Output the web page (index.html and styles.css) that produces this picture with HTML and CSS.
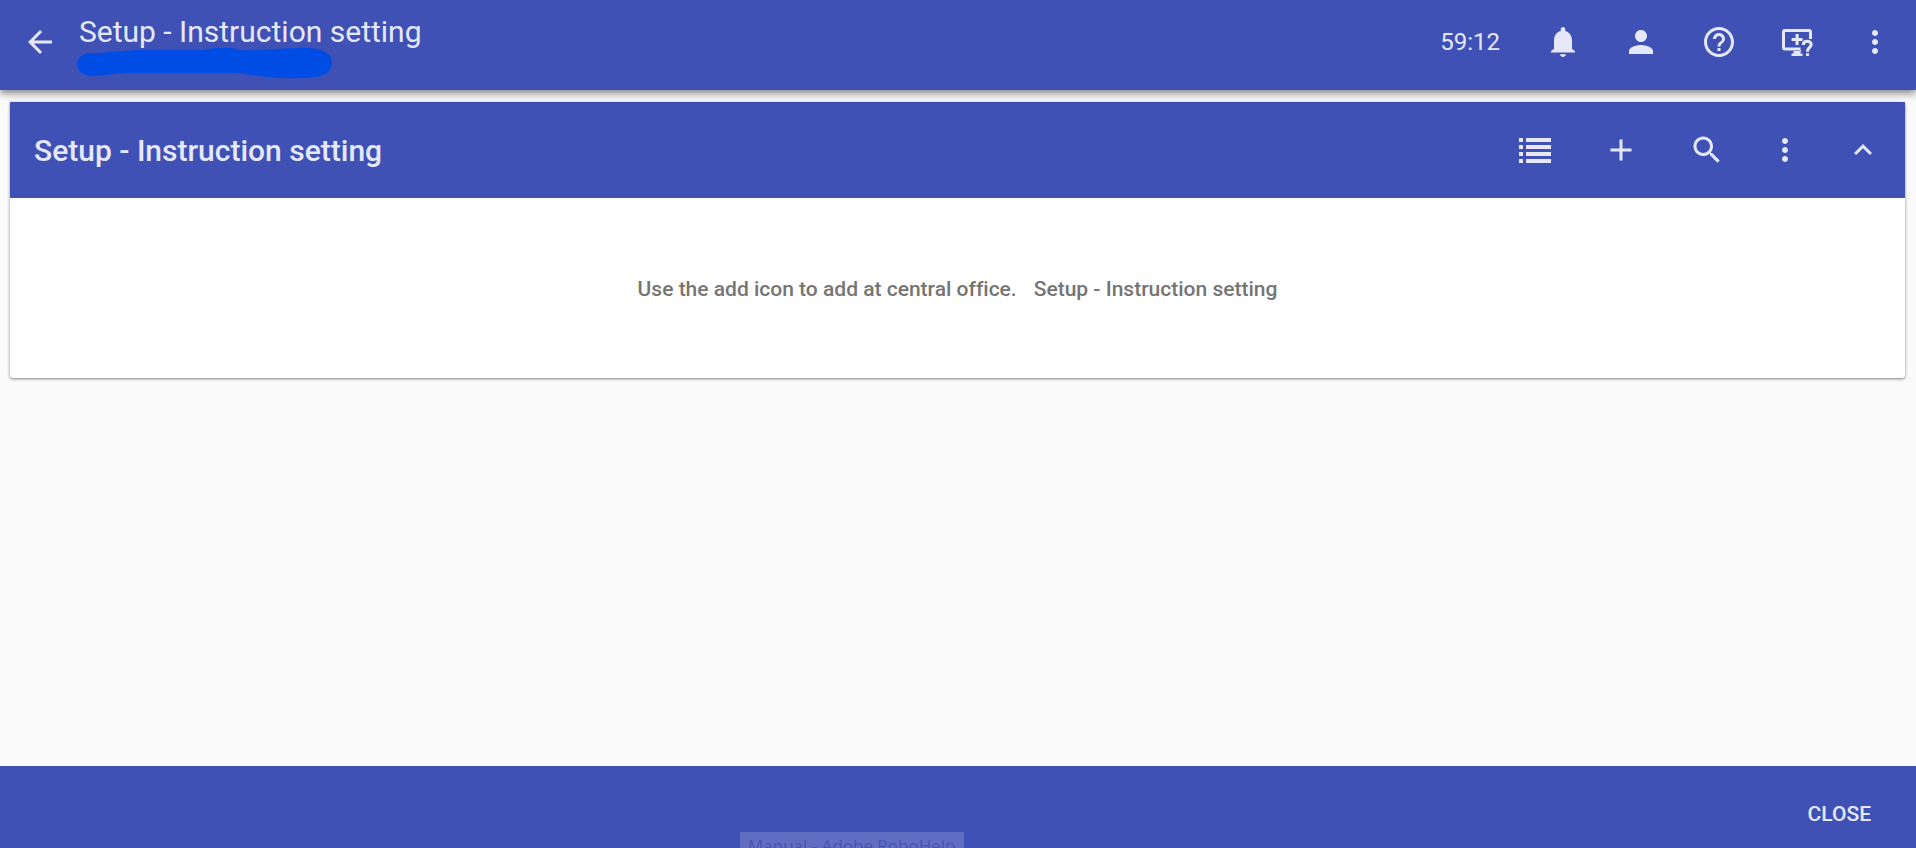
FILE: index.html
```html
<!DOCTYPE html>
<html lang="en">
<head>
<meta charset="utf-8">
<title>Setup - Instruction setting</title>
<link rel="stylesheet" href="styles.css">
</head>
<body>
<header class="topbar">
  <button class="icon-btn" aria-label="Back"><svg class="icon" viewBox="0 0 24 24"><path d="M20 11H7.83l5.59-5.59L12 4l-8 8 8 8 1.41-1.41L7.83 13H20v-2z"/></svg></button>
  <div class="heading">
    <h1 class="page-title">Setup - Instruction setting</h1>
    <svg class="scribble" viewBox="0 0 256 32" aria-hidden="true"><path d="M14 5C30 5 40 3 60 2H128C138-1 154-1 164 2C188 3 200 0 228 0C242 0 254 3 255 14C255 23 248 28 238 29C210 32 185 29 162 25H50C38 25 28 28 16 28C6 28 0 23 0 16C0 10 6 5 14 5Z"/></svg>
  </div>
  <span class="timer">59:12</span>
  <nav class="actions">
    <button class="icon-btn" aria-label="Notifications"><svg class="icon" viewBox="0 0 24 24"><path d="M12 22c1.1 0 2-.9 2-1.8h-4c0 .9.9 1.8 2 1.800zm6-5.500v-5.500c0-3.070-1.640-5.640-4.500-6.320V3.500C13.500 2.670 12.830 2 12 2s-1.500.67-1.500 1.500v1.180C7.630 5.360 6 7.920 6 11v5.500l-2 1.500v1h16v-1z"/></svg></button>
    <button class="icon-btn" aria-label="Account"><svg class="icon" viewBox="0 0 24 24"><path d="M12 12c2.210 0 4-1.790 4-4s-1.790-4-4-4-4 1.790-4 4 1.790 4 4 4zm0 2c-2.670 0-8 1.340-8 4v2h16v-2c0-2.660-5.330-4-8-4z"/></svg></button>
    <button class="icon-btn" aria-label="Help"><svg class="icon" viewBox="0 0 24 24"><path d="M11 18h2v-2h-2v2zm1-16C6.480 2 2 6.480 2 12s4.480 10 10 10 10-4.480 10-10S17.520 2 12 2zm0 18c-4.410 0-8-3.590-8-8s3.590-8 8-8 8 3.590 8 8-3.590 8-8 8zm0-14c-2.210 0-4 1.790-4 4h2c0-1.100.9-2 2-2s2 .9 2 2c0 2-3 1.750-3 5h2c0-2.250 3-2.500 3-5 0-2.210-1.790-4-4-4z"/></svg></button>
    <button class="icon-btn" aria-label="Remote support"><svg class="icon" viewBox="0 0 36 36"><path d="M33 15V8Q33 5 30 5H6Q3 5 3 8V23.500Q3 26.500 6 26.500H21.500V23.500H6V8H30V15ZM16.600 10h3v4h4v3h-4v4h-3v-4h-4v-3h4ZM14.500 26h7.500v2.500h-1v1h2.500v2.500H12.500v-2.500h2Z"/><path class="stroke" d="M24.300 21C24.300 18.200 26 17.200 28.200 17.200S32.200 18.500 32.200 20.600C32.200 23.500 28.400 23.600 28.400 27.800"/><path d="M27 29.200h3v2.800h-3z"/></svg></button>
    <button class="icon-btn" aria-label="More"><svg class="icon" viewBox="0 0 24 24"><path d="M12 8c1.100 0 2-.9 2-2s-.9-2-2-2-2 .9-2 2 .9 2 2 2zm0 2c-1.100 0-2 .9-2 2s.9 2 2 2 2-.9 2-2-.9-2-2-2zm0 6c-1.100 0-2 .9-2 2s.9 2 2 2 2-.9 2-2-.9-2-2-2z"/></svg></button>
  </nav>
</header>
<main class="content">
  <section class="card">
    <div class="card-head">
      <h2 class="card-title">Setup - Instruction setting</h2>
      <div class="card-tools">
        <div class="main-tools">
          <button class="icon-btn" aria-label="List view"><svg class="icon" viewBox="0 0 36 36"><path d="M2 6h4v4H2zM9 6h25v4H9zM2 13h4v4H2zM9 13h25v4H9zM2 20h4v4H2zM9 20h25v4H9zM2 27h4v4H2zM9 27h25v4H9z"/></svg></button>
          <button class="icon-btn" aria-label="Add"><svg class="icon" viewBox="0 0 24 24"><path d="M19 13h-6v6h-2v-6H5v-2h6V5h2v6h6v2z"/></svg></button>
          <button class="icon-btn" aria-label="Search"><svg class="icon" viewBox="0 0 24 24"><path d="M15.500 14h-.79l-.28-.27C15.410 12.590 16 11.110 16 9.500 16 5.910 13.090 3 9.500 3S3 5.910 3 9.500 5.910 16 9.500 16c1.610 0 3.090-.59 4.230-1.570l.27.28v.79l5 4.990L20.490 19l-4.990-5zm-6 0C7.010 14 5 11.990 5 9.500S7.010 5 9.500 5 14 7.010 14 9.500 11.990 14 9.500 14z"/></svg></button>
        </div>
        <button class="icon-btn" aria-label="More options"><svg class="icon" viewBox="0 0 24 24"><path d="M12 8c1.100 0 2-.9 2-2s-.9-2-2-2-2 .9-2 2 .9 2 2 2zm0 2c-1.100 0-2 .9-2 2s.9 2 2 2 2-.9 2-2-.9-2-2-2zm0 6c-1.100 0-2 .9-2 2s.9 2 2 2 2-.9 2-2-.9-2-2-2z"/></svg></button>
        <button class="icon-btn" aria-label="Collapse"><svg class="icon" viewBox="0 0 24 24"><path d="M12 8l-6 6 1.410 1.410L12 10.830l4.590 4.580L18 14z"/></svg></button>
      </div>
    </div>
    <p class="card-body"><span>Use the add icon to add at central office.</span><span>Setup - Instruction setting</span></p>
  </section>
</main>
<footer class="footer">
  <button class="close-btn">CLOSE</button>
  <div class="ghost-tip">Manual - Adobe RoboHelp</div>
</footer>
</body>
</html>
```
FILE: styles.css
```css
* { box-sizing: border-box; }
body {
  margin: 0;
  height: 100vh;
  display: flex;
  flex-direction: column;
  overflow: hidden;
  background: #fafafa;
  font-family: Roboto, "Liberation Sans", sans-serif;
  font-variant-ligatures: none;
}
button {
  border: 0;
  padding: 0;
  background: none;
  color: inherit;
  font-family: inherit;
  cursor: pointer;
}
h1, h2, p { margin: 0; }
.topbar {
  display: flex;
  align-items: flex-start;
  height: 90px;
  padding: 12px 2px 0 1px;
  background: #3f51b5;
  color: #e6e8fa;
  box-shadow: 0 3px 8px rgba(0, 0, 0, .5);
  z-index: 1;
}
.icon-btn {
  display: flex;
  align-items: center;
  justify-content: center;
  width: 78px;
  height: 60px;
}
.icon {
  width: 36px;
  height: 36px;
  fill: currentColor;
}
.stroke {
  fill: none;
  stroke: currentColor;
  stroke-width: 3;
}
.heading {
  display: flex;
  flex-direction: column;
  flex: 1;
}
.page-title {
  font-size: 30px;
  line-height: 40px;
  font-weight: 400;
}
.scribble {
  width: 256px;
  height: 32px;
  margin: -4px 0 0 -2px;
  fill: #004de6;
}
.timer {
  margin-right: 24px;
  font-size: 24px;
  line-height: 60px;
}
.actions, .card-tools { display: flex; }
.main-tools {
  display: flex;
  gap: 8px;
}
.content {
  flex: 1;
  padding: 12px 11px 12px 10px;
}
.card {
  border-radius: 3px;
  background: #fff;
  box-shadow: 0 1px 3px rgba(0, 0, 0, .5);
}
.card-head {
  display: flex;
  align-items: center;
  justify-content: space-between;
  height: 96px;
  padding: 0 3px 0 24px;
  background: #3f51b5;
  color: #e6e8fa;
}
.card-title {
  padding-top: 2px;
  font-size: 30px;
  line-height: 36px;
  font-weight: 500;
}
.card-body {
  display: flex;
  justify-content: center;
  gap: 17px;
  padding: 76px 24px 74px;
  color: #757575;
  font-size: 21px;
  line-height: 30px;
  font-weight: 500;
}
.footer {
  position: relative;
  display: flex;
  justify-content: flex-end;
  align-items: center;
  height: 82px;
  padding: 14px 21px 0;
  background: #3f51b5;
  color: #e6e8fa;
}
.close-btn {
  padding: 0 24px;
  font-size: 21px;
  line-height: 54px;
  font-weight: 500;
}
.ghost-tip {
  position: absolute;
  left: 740px;
  top: 66px;
  padding: 0 8px;
  background: #606dc1;
  color: #4655af;
  font-family: "Open Sans", "Noto Sans", sans-serif;
  font-size: 17px;
  line-height: 28px;
}
```
